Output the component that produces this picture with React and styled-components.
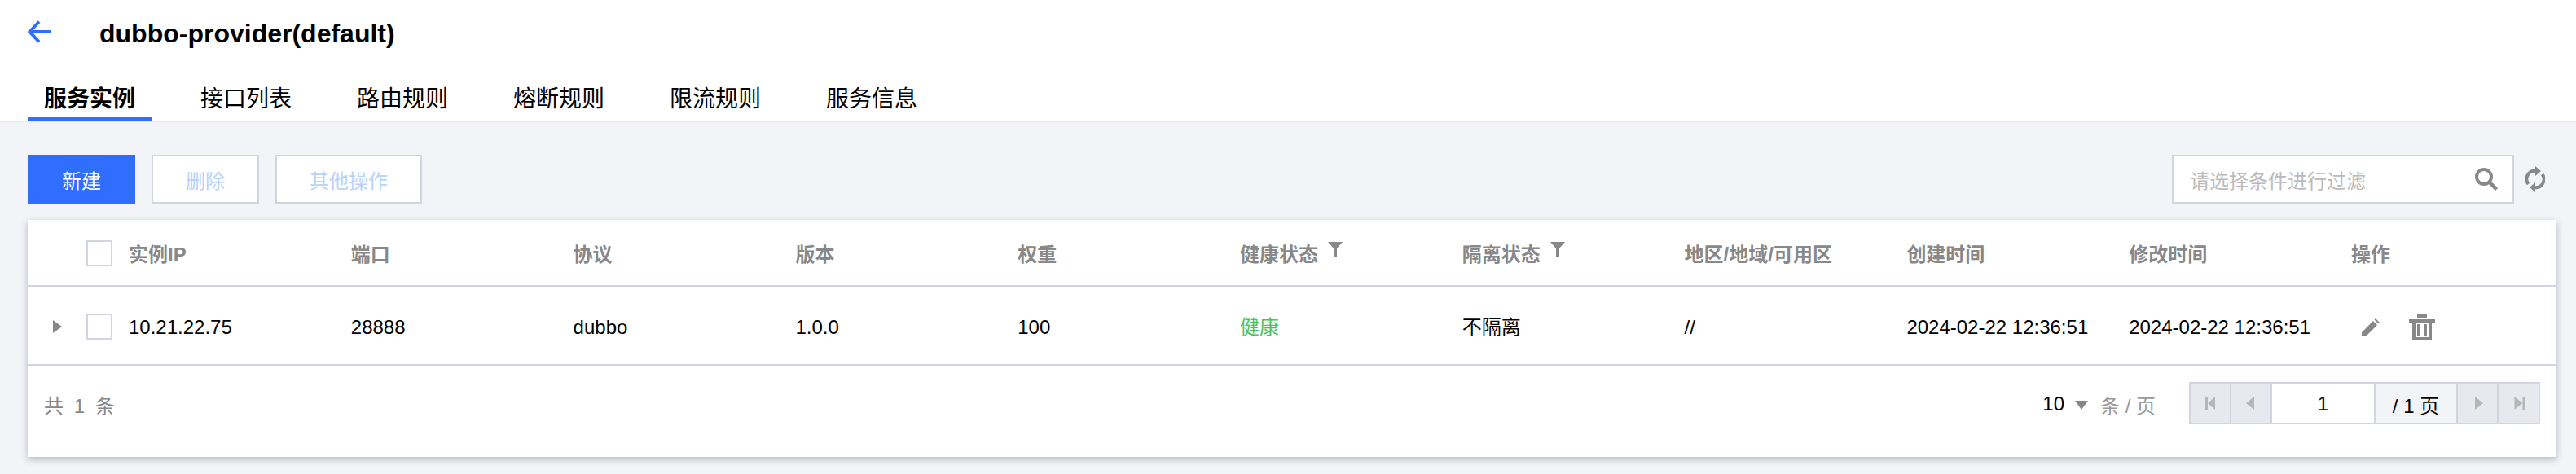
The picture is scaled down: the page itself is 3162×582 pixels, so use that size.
import React from "react";
import styled, { createGlobalStyle } from "styled-components";

const Global = createGlobalStyle`
  html, body { margin: 0; padding: 0; background: #f2f4f8; }
  body { font-family: "Liberation Sans", "Noto Sans CJK SC", sans-serif; font-size: 24px; color: #000; }
  * { box-sizing: border-box; }
`;

const Page = styled.div`
  width: 3162px;
  height: 582px;
  overflow: hidden;
  display: flex;
  flex-direction: column;
`;
const Head = styled.header`
  height: 150px;
  background: #fff;
  border-bottom: 2px solid #e8eaef;
  display: flex;
  flex-direction: column;
  padding: 0 34px;
`;
const TitleRow = styled.div`
  height: 84px;
  display: flex;
  align-items: center;
`;
const Back = styled.svg`
  width: 28px;
  height: 28px;
  margin: -4px 60px 0 0;
  flex: none;
`;
const Title = styled.h1`
  margin: 0;
  font-size: 32px;
  line-height: 44px;
  font-weight: 700;
  color: #000;
`;
const Tabs = styled.nav`
  display: flex;
  gap: 40px;
  height: 66px;
`;
const Tab = styled.a`
  width: 152px;
  height: 66px;
  padding-top: 20px;
  text-align: center;
  font-size: 28px;
  line-height: 40px;
  color: #000;
  font-weight: ${(p) => (p.$active ? 700 : 400)};
  border-bottom: 4px solid ${(p) => (p.$active ? "#306eff" : "transparent")};
`;
const Main = styled.main`
  flex: 1;
  padding: 40px 24px 0 34px;
  display: flex;
  flex-direction: column;
  gap: 20px;
`;
const Toolbar = styled.div`
  display: flex;
  align-items: center;
  gap: 20px;
  height: 60px;
`;
const Button = styled.button`
  height: 60px;
  width: ${(p) => p.$w}px;
  padding: 0;
  font: inherit;
  font-size: 24px;
  color: ${(p) => (p.$primary ? "#fff" : "#b9d2fb")};
  background: ${(p) => (p.$primary ? "#306eff" : "#fff")};
  border: ${(p) => (p.$primary ? "none" : "2px solid #d0d5e0")};
`;
const Right = styled.div`
  margin-left: auto;
  display: flex;
  align-items: center;
  margin-right: 13px;
`;
const Search = styled.div`
  width: 420px;
  height: 60px;
  background: #fff;
  border: 2px solid #d0d5e0;
  display: flex;
  align-items: center;
  justify-content: space-between;
  padding: 0 18px 0 20px;
  color: #bbb;
`;
const Refresh = styled.svg`
  width: 24px;
  height: 32px;
  margin-left: 14px;
  margin-right: 1px;
`;
const Card = styled.section`
  width: 3104px;
  height: 291px;
  background: #fff;
  box-shadow: 0 3px 8px rgba(54, 58, 80, 0.32);
  display: flex;
  flex-direction: column;
`;
const Row = styled.div`
  display: grid;
  grid-template-columns: 124px repeat(10, 272.8px) 1fr;
  align-items: center;
  height: ${(p) => p.$h}px;
  padding-top: 2px;
  border-bottom: 2px solid #d0d5e0;
`;
const Lead = styled.div`
  display: flex;
  align-items: center;
  height: 32px;
  padding-left: 31px;
`;
const Expander = styled.span`
  width: 0;
  height: 0;
  border-left: 11px solid #888;
  border-top: 8px solid transparent;
  border-bottom: 8px solid transparent;
  margin-right: 30px;
`;
const Check = styled.span`
  width: 32px;
  height: 32px;
  margin-left: ${(p) => (p.$head ? "41px" : "0")};
  background: #fff;
  border: 2px solid #d0d5e0;
`;
const HeadCell = styled.div`
  color: #888;
  font-weight: 700;
  display: flex;
  align-items: flex-start;
  line-height: 34px;
  padding-top: 4px;
`;
const Funnel = styled.svg`
  width: 18px;
  height: 18px;
  margin-left: 12px;
  margin-top: 1px;
`;
const Cell = styled.div`
  line-height: 34px;
  padding-top: 3px;
  color: ${(p) => p.$color || "#000"};
  white-space: nowrap;
`;
const Actions = styled.div`
  display: flex;
  align-items: center;
  gap: 36px;
  padding-left: 13px;
  padding-top: 2px;
`;
const Footer = styled.div`
  flex: 1;
  display: flex;
  align-items: center;
  padding: 0 20px 20px;
`;
const Total = styled.span`
  color: #888;
  word-spacing: 6px;
  padding-top: 3px;
`;
const PageSize = styled.div`
  margin-left: auto;
  display: flex;
  align-items: center;
  gap: 13px;
  padding-top: 2px;
`;
const Caret = styled.span`
  width: 0;
  height: 0;
  margin-top: 2px;
  border-top: 11px solid #888;
  border-left: 8.500px solid transparent;
  border-right: 8.500px solid transparent;
`;
const Muted = styled.span`
  color: #999;
  margin-left: 2px;
`;
const Pager = styled.div`
  margin-left: 41px;
  display: flex;
  height: 52px;
  border: 2px solid #d0d5e0;
`;
const PagerBtn = styled.span`
  width: ${(p) => (p.$last ? 49 : 50)}px;
  background: #e7e9ee;
  border-right: ${(p) => (p.$last ? "none" : "2px solid #d0d5e0")};
  display: flex;
  align-items: center;
  justify-content: center;
`;
const PagerInput = styled.span`
  width: 127px;
  background: #fff;
  display: flex;
  align-items: center;
  justify-content: center;
  padding-top: 2px;
  border-right: 2px solid #d0d5e0;
`;
const PagerTotal = styled.span`
  width: 101px;
  background: #f2f4f8;
  display: flex;
  align-items: center;
  justify-content: center;
  padding-top: 2px;
  border-right: 2px solid #d0d5e0;
`;
const Glyph = styled.svg`
  width: 14px;
  height: 24px;
  fill: #b6b6b6;
`;

const Trash = () => (
  <svg width="32" height="32" viewBox="0 0 32 32" fill="#888">
    <path d="M10 0h12v4H10zM0 6h32v4H0zM4 10h24v22H4zM8 10v18h16V10zM10 12h4v14h-4zM18 12h4v14h-4z" fillRule="evenodd" />
  </svg>
);
const Pencil = () => (
  <svg width="22" height="22" viewBox="0 0 22 22" fill="#888">
    <path d="M0 17 14 3l5 5L5 22H0zM15.500 1.500 17 0l5 5-1.500 1.500z" />
  </svg>
);

const FunnelIcon = () => (
  <Funnel viewBox="0 0 18 18"><path d="M0 0h18L11 8v10H7V8z" fill="#888" /></Funnel>
);

const columns = [
  ["实例IP", "10.21.22.75"],
  ["端口", "28888"],
  ["协议", "dubbo"],
  ["版本", "1.0.0"],
  ["权重", "100"],
  ["健康状态", "健康", true, "#4cbf60"],
  ["隔离状态", "不隔离", true],
  ["地区/地域/可用区", "//"],
  ["创建时间", "2024-02-22 12:36:51"],
  ["修改时间", "2024-02-22 12:36:51"],
];

export default function App() {
  return (
    <Page>
      <Global />
      <Head>
        <TitleRow>
          <Back viewBox="0 0 28 28" fill="none" stroke="#306eff" strokeWidth="4">
            <path d="M14 1.500 2.500 14 14 26.500M3 14h25" />
          </Back>
          <Title>dubbo-provider(default)</Title>
        </TitleRow>
        <Tabs>
          {["服务实例", "接口列表", "路由规则", "熔断规则", "限流规则", "服务信息"].map((t, i) => (
            <Tab key={t} $active={i === 0}>{t}</Tab>
          ))}
        </Tabs>
      </Head>
      <Main>
        <Toolbar>
          <Button $primary $w={132}>新建</Button>
          <Button $w={132}>删除</Button>
          <Button $w={180}>其他操作</Button>
          <Right>
            <Search>
              请选择条件进行过滤
              <svg width="28" height="28" viewBox="0 0 28 28" fill="none" stroke="#888" strokeWidth="4">
                <circle cx="11" cy="11" r="9" />
                <path d="M17 17l9.500 9.500" strokeWidth="4.500" />
              </svg>
            </Search>
            <Refresh viewBox="0 0 24 32">
              <g fill="none" stroke="#888" strokeWidth="4">
                <path d="M3.500 22A10 10 0 0 1 13 6" />
                <path d="M20.500 10A10 10 0 0 1 11 26" />
              </g>
              <path d="M12 0l7 6-7 6zM12 32l-7-6 7-6z" fill="#888" />
            </Refresh>
          </Right>
        </Toolbar>
        <Card>
          <Row $h={82}>
            <Lead><Check $head /></Lead>
            {columns.map(([h, , f]) => (
              <HeadCell key={h}>{h}{f && <FunnelIcon />}</HeadCell>
            ))}
            <HeadCell>操作</HeadCell>
          </Row>
          <Row $h={97}>
            <Lead><Expander /><Check /></Lead>
            {columns.map(([h, v, , c]) => (
              <Cell key={h} $color={c}>{v}</Cell>
            ))}
            <Actions><Pencil /><Trash /></Actions>
          </Row>
          <Footer>
            <Total>共 1 条</Total>
            <PageSize>
              10 <Caret /> <Muted>条 / 页</Muted>
            </PageSize>
            <Pager>
              <PagerBtn>
                <Glyph viewBox="0 0 14 24"><path d="M1 4h3v16H1zM13 4v16L4 12z" /></Glyph>
              </PagerBtn>
              <PagerBtn>
                <Glyph viewBox="0 0 14 24"><path d="M11 4v16L1 12z" /></Glyph>
              </PagerBtn>
              <PagerInput>1</PagerInput>
              <PagerTotal>/ 1 页</PagerTotal>
              <PagerBtn>
                <Glyph viewBox="0 0 14 24"><path d="M4 4v16l10-8z" /></Glyph>
              </PagerBtn>
              <PagerBtn $last>
                <Glyph viewBox="0 0 14 24"><path d="M1.500 4v16l10-8zM11.500 4H14v16h-2.500z" /></Glyph>
              </PagerBtn>
            </Pager>
          </Footer>
        </Card>
      </Main>
    </Page>
  );
}
